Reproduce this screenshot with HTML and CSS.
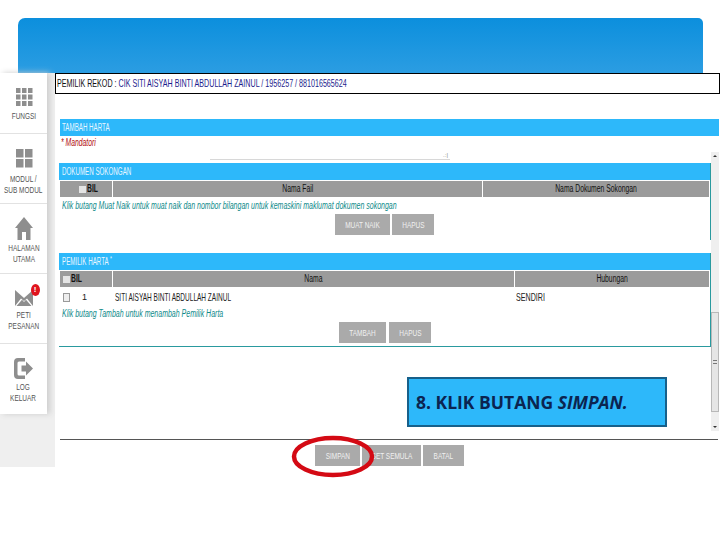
FILE: index.html
```html
<!DOCTYPE html>
<html lang="en">
<head>
<meta charset="utf-8">
<title>Tambah Harta</title>
<link rel="stylesheet" href="styles.css">
</head>
<body>
<div class="slide">
  <div class="banner"></div>
  <div class="workspace">
    <!-- side menu -->
    <div class="sidecol">
      <ul class="sidemenu">
        <li class="h60">
          <svg width="18" height="20" viewBox="0 0 18 20"><path fill="#8e8e8e" d="M1 1h4.500v5H1zM7 1h4.500v5H7zM13 1h4.500v5H13zM1 7.500h4.500v5H1zM7 7.500h4.500v5H7zM13 7.500h4.500v5H13zM1 14h4.500v5H1zM7 14h4.500v5H7zM13 14h4.500v5H13z"/></svg>
          <span class="nc">FUNGSI</span>
        </li>
        <li class="h70">
          <svg width="18" height="20" viewBox="0 0 18 20"><path fill="#8e8e8e" d="M1 1h7.500v8.500H1zM10 1h7.500v8.500H10zM1 11h7.500v8.500H1zM10 11h7.500v8.500H10z"/></svg>
          <span class="nc">MODUL /<br>SUB MODUL</span>
        </li>
        <li class="h70 tighter">
          <svg width="18" height="23" viewBox="0 0 18 23"><path fill="#8e8e8e" d="M9 0 18 11H15.500V23H11V15H7V23H2.500V11H0Z"/></svg>
          <span class="nc">HALAMAN<br>UTAMA</span>
        </li>
        <li class="h70 lower">
          <span class="mailwrap">
            <svg width="18" height="18" viewBox="0 0 18 18"><path fill="#8e8e8e" d="M0 1 9 9 18 1V17L12 9.500 9 12 6 9.500 0 17ZM1.500 17 7 10.800 9 13 11 10.800 16.500 17Z"/></svg>
            <b class="badge">!</b>
          </span>
          <span class="nc">PETI<br>PESANAN</span>
        </li>
        <li class="h70 last">
          <svg width="19" height="21" viewBox="0 0 19 21"><path fill="#8e8e8e" d="M4 0H11V3.500H5Q3.500 3.500 3.500 5V16Q3.500 17.500 5 17.500H11V21H4Q0 21 0 17V4Q0 0 4 0ZM7.500 7.500H12V3.500L19 10.500 12 17.500V13.500H7.500Z"/></svg>
          <span class="nc">LOG<br>KELUAR</span>
        </li>
      </ul>
    </div>

    <div class="main">
      <div class="recordbar"><span class="nl">PEMILIK REKOD : <span class="recordname">CIK SITI AISYAH BINTI ABDULLAH ZAINUL / 1956257 / 881016565624</span></span></div>

      <div class="titlebar formtitle"><span class="nl">TAMBAH HARTA</span></div>
      <div class="mandatory"><span class="nl">* Mandatori</span></div>

      <div class="frame">
        <div class="framebody">
          <div class="textline"><span class="grip">.:|</span></div>

          <div class="section">
            <div class="titlebar"><span class="nl">DOKUMEN SOKONGAN</span></div>
            <div class="tablehead">
              <div class="colbil"><i class="tick"></i><span class="nl">BIL</span></div>
              <div class="colwide"><span class="nc">Nama Fail</span></div>
              <div class="coldoc"><span class="nc">Nama Dokumen Sokongan</span></div>
            </div>
            <p class="hint"><span class="nl">Klik butang Muat Naik untuk muat naik dan nombor bilangan untuk kemaskini maklumat dokumen sokongan</span></p>
            <div class="btnrow shift1">
              <a class="btn w55"><span class="nc">MUAT NAIK</span></a>
              <a class="btn w42"><span class="nc">HAPUS</span></a>
            </div>
          </div>

          <div class="section second">
            <div class="titlebar"><span class="nl">PEMILIK HARTA <sup>*</sup></span></div>
            <div class="tablehead">
              <div class="colbil left"><i class="tick"></i><span class="nl">BIL</span></div>
              <div class="colname"><span class="nc">Nama</span></div>
              <div class="colrel"><span class="nc">Hubungan</span></div>
            </div>
            <div class="datarow">
              <div class="cellbil"><i class="tick box"></i><span>1</span></div>
              <div class="cellname"><span class="nl">SITI AISYAH BINTI ABDULLAH ZAINUL</span></div>
              <div class="cellrel"><span class="nl">SENDIRI</span></div>
            </div>
            <p class="hint tight"><span class="nl">Klik butang Tambah untuk menambah Pemilik Harta</span></p>
            <div class="btnrow shift2">
              <a class="btn w47"><span class="nc">TAMBAH</span></a>
              <a class="btn w42"><span class="nc">HAPUS</span></a>
            </div>
          </div>
        </div>

        <div class="scrollbar">
          <i class="arrow up"></i>
          <div class="thumb"><i></i></div>
          <i class="arrow down"></i>
        </div>
      </div>

      <div class="rule"></div>
      <div class="btnrow footer">
        <a class="btn w45"><span class="nc">SIMPAN</span></a>
        <a class="btn w59"><span class="nc">SET SEMULA</span></a>
        <a class="btn w41"><span class="nc">BATAL</span></a>
      </div>
    </div>
  </div>

  <!-- note and ring on top of the form -->
  <div class="callout">8. KLIK BUTANG <em>SIMPAN.</em></div>
  <svg class="ring" width="84" height="44" viewBox="0 0 84 44">
    <ellipse cx="42" cy="21.500" rx="39" ry="18.500" fill="none" stroke="#d40a14" stroke-width="4.500"/>
  </svg>
</div>
</body>
</html>
```

FILE: styles.css
```css
* {
  box-sizing: border-box;
}
body {
  margin: 0;
  background-color: #fff;
  font-family: "Liberation Sans", sans-serif;
  font-size: 9px;
}
/* condensed text, there is no narrow face to use */
.nl,
.nc {
  display: inline-block;
  white-space: nowrap;
  transform: scaleX(.68);
}
.nl {
  transform-origin: left center;
}
.slide {
  position: relative;
  width: 720px;
  height: 540px;
  overflow: hidden;
  padding-top: 18px;
}
.banner {
  width: 685px;
  height: 55px;
  margin-left: 18px;
  border-radius: 7px 5px 0 0;
  background: linear-gradient(#0c8fdd, #2b9de2);
}
.workspace {
  display: flex;
  align-items: flex-start;
}

/* side menu */
.sidecol {
  width: 55px;
  height: 394px;
  flex: none;
  background-color: #efefef;
}
.sidemenu {
  list-style-type: none;
  margin: 0;
  padding: 0;
  width: 47px;
  background-color: #fff;
  box-shadow: 3px 0 6px #cdcdcd;
}
.sidemenu li {
  display: flex;
  flex-direction: column;
  align-items: center;
  border-bottom: 1px solid #e2e2e2;
  color: #555;
  text-align: center;
  line-height: 10.500px;
  font-size: 9.500px;
}
.sidemenu li svg {
  display: block;
}
.h60 {
  height: 61px;
  padding-top: 14px;
  gap: 4px;
}
.h70 {
  height: 70px;
  padding-top: 14px;
  gap: 6px;
}
.sidemenu .tighter {
  padding-top: 13px;
  gap: 3px;
}
.sidemenu .lower {
  padding-top: 15px;
  gap: 3px;
}
.sidemenu .last {
  border-bottom: none;
  padding-top: 14px;
  gap: 3px;
}
.mailwrap {
  position: relative;
  display: block;
}
.badge {
  position: absolute;
  left: 16px;
  top: -5px;
  width: 9px;
  height: 12px;
  border-radius: 50%;
  background-color: #e0141e;
  color: #fff;
  font-size: 8px;
  line-height: 12px;
}

/* right hand form */
.main {
  width: 665px;
  flex: none;
}
.recordbar {
  height: 21px;
  padding-left: 1px;
  border: 1px solid #000;
  background-color: #fff;
  color: #111;
  font-size: 10.500px;
  line-height: 19px;
}
.recordname {
  color: #1c1c8c;
}
.titlebar {
  height: 17px;
  padding-left: 3px;
  background-color: #2db8fa;
  color: #e8f6ff;
  font-size: 10px;
  line-height: 17px;
}
.titlebar .nl {
  transform: scaleX(.62);
}
.titlebar sup {
  font-size: 8px;
  line-height: 0;
}
.formtitle {
  margin: 25px 1px 0 5px;
  padding-left: 2px;
}
.mandatory {
  height: 16px;
  padding-left: 6px;
  color: #b00d0d;
  font-size: 10px;
  font-style: italic;
  line-height: 14px;
}
.frame {
  display: flex;
  width: 660px;
  height: 279px;
  margin-left: 4px;
}
.framebody {
  width: 652px;
  flex: none;
}
.textline {
  position: relative;
  width: 240px;
  height: 8px;
  margin-left: 151px;
  border-bottom: 1px solid #d8d8d8;
}
.grip {
  position: absolute;
  right: 2px;
  bottom: 0;
  color: #888;
  font-size: 6px;
  line-height: 7px;
}
.section {
  height: 77px;
  margin-top: 3px;
  border-right: 1px solid #2a9a9f;
}
.second {
  height: 94px;
  margin-top: 13px;
  border-bottom: 1px solid #2a9a9f;
}
.tablehead {
  display: flex;
  gap: 1px;
  height: 16px;
  margin: 1px 1px 0 1px;
  color: #111;
  font-size: 10px;
  line-height: 16px;
  text-align: center;
}
.tablehead div {
  background-color: #9b9b9b;
}
.colbil {
  display: flex;
  align-items: center;
  width: 52px;
  flex: none;
  padding-left: 19px;
  font-weight: bold;
}
.colbil.left {
  padding-left: 3px;
}
.colwide {
  width: 369px;
  flex: none;
}
.coldoc {
  flex: 1;
}
.colname {
  width: 401px;
  flex: none;
}
.colrel {
  flex: 1;
}
.tick {
  display: block;
  width: 7px;
  height: 7px;
  margin-right: 1px;
  background-color: #e4e4e4;
}
.box {
  width: 7px;
  height: 9px;
  margin: 0;
  border: 1px solid #999;
  background-color: #eee;
}
.hint {
  height: 17px;
  margin: 0;
  padding-left: 3px;
  color: #0f8a8a;
  font-size: 10px;
  font-style: italic;
  line-height: 17px;
}
.hint .nl {
  transform: scaleX(.7);
}
.tight {
  height: 15px;
  line-height: 15px;
}
.datarow {
  display: flex;
  align-items: center;
  height: 18px;
  margin-top: 1px;
  color: #222;
  font-size: 10.500px;
}
.cellbil {
  display: flex;
  align-items: center;
  gap: 12px;
  width: 56px;
  flex: none;
  padding-left: 4px;
  font-size: 9px;
}
.cellname {
  width: 401px;
  flex: none;
}
.cellname .nl {
  transform: scaleX(.62);
}
.btnrow {
  display: flex;
  gap: 2px;
}
.shift1 {
  margin: 0 0 0 276px;
}
.shift2 {
  gap: 3px;
  margin: 1px 0 0 280px;
}
.btn {
  display: block;
  height: 21px;
  background-color: #aaaaaa;
  color: #f0f0f0;
  font-size: 9.500px;
  line-height: 21px;
  text-align: center;
}
.w41 { width: 41px; }
.w42 { width: 42px; }
.w45 { width: 45px; }
.w47 { width: 47px; }
.w55 { width: 55px; }
.w59 { width: 59px; }

/* scrollbar of the inner frame */
.scrollbar {
  display: flex;
  flex-direction: column;
  align-items: center;
  justify-content: space-between;
  position: relative;
  width: 8px;
  background-color: #efefef;
  padding: 3px 0;
}
.arrow {
  display: block;
  width: 0;
  height: 0;
  border-left: 2px solid transparent;
  border-right: 2px solid transparent;
}
.up {
  border-bottom: 2px solid #333;
}
.down {
  border-top: 2px solid #333;
}
.thumb {
  position: absolute;
  top: 160px;
  left: 0;
  display: flex;
  align-items: center;
  justify-content: center;
  width: 8px;
  height: 100px;
  border: 1px solid #b8b8b8;
  background-color: #e6e6e6;
}
.thumb i {
  display: block;
  width: 4px;
  height: 4px;
  border-top: 1px solid #777;
  border-bottom: 1px solid #777;
}
.rule {
  height: 1px;
  margin: 8px 2px 0 5px;
  background-color: #555;
}
.footer {
  margin: 5px 0 0 260px;
}

/* callout and ring */
.callout {
  position: absolute;
  left: 407px;
  top: 377px;
  width: 260px;
  height: 50px;
  padding-left: 7px;
  border: 2px solid #17608a;
  background-color: #2db8fa;
  color: #0b2450;
  font-family: "Open Sans", "Noto Sans", sans-serif;
  font-size: 17.500px;
  font-weight: 700;
  line-height: 46px;
  white-space: nowrap;
}
.ring {
  position: absolute;
  left: 291px;
  top: 435px;
}
```
